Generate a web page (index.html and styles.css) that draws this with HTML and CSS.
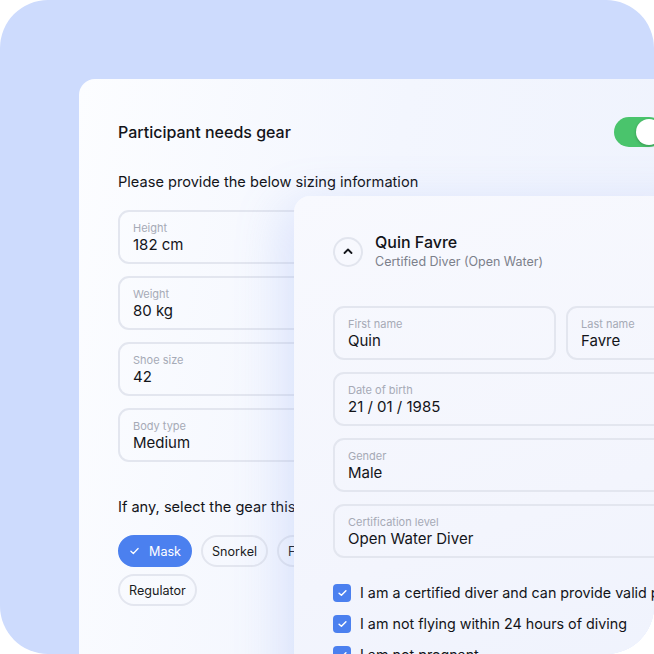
FILE: index.html
```html
<!DOCTYPE html>
<html lang="en">
<head>
<meta charset="utf-8">
<title>Participant gear</title>
<link rel="stylesheet" href="styles.css">
</head>
<body>
<div class="frame">
  <section class="card card-gear">
    <div class="gear-head">
      <h2 class="title">Participant needs gear</h2>
      <span class="toggle"><span class="knob"></span></span>
    </div>
    <p class="para">Please provide the below sizing information</p>
    <div class="fields">
      <div class="field"><span class="label">Height</span><span class="value">182 cm</span></div>
      <div class="field"><span class="label">Weight</span><span class="value">80 kg</span></div>
      <div class="field"><span class="label">Shoe size</span><span class="value">42</span></div>
      <div class="field"><span class="label">Body type</span><span class="value">Medium</span></div>
    </div>
    <p class="para para-gear">If any, select the gear this participant needs</p>
    <div class="chips">
      <span class="chip chip-on"><svg class="chip-check" viewBox="0 0 10 8" width="9" height="8"><path d="M1 4.2 L3.7 6.8 L9 1.2" fill="none" stroke="#fff" stroke-width="1.4" stroke-linecap="round" stroke-linejoin="round"/></svg>Mask</span>
      <span class="chip">Snorkel</span>
      <span class="chip">Fins</span>
      <span class="chip">Wetsuit</span>
      <span class="chip">Regulator</span>
    </div>
  </section>

  <section class="card card-person">
    <div class="person-head">
      <span class="collapse"><svg viewBox="0 0 10 6" width="10" height="6"><path d="M1.5 5 L5 1.5 L8.5 5" fill="none" stroke="#15171c" stroke-width="1.8" stroke-linecap="round" stroke-linejoin="round"/></svg></span>
      <div class="person-text">
        <h3 class="name">Quin Favre</h3>
        <p class="sub">Certified Diver (Open Water)</p>
      </div>
    </div>
    <div class="fields fields-person">
      <div class="row">
        <div class="field field-first"><span class="label">First name</span><span class="value">Quin</span></div>
        <div class="field field-last"><span class="label">Last name</span><span class="value">Favre</span></div>
      </div>
      <div class="field"><span class="label">Date of birth</span><span class="value">21 / 01 / 1985</span></div>
      <div class="field"><span class="label">Gender</span><span class="value">Male</span></div>
      <div class="field"><span class="label">Certification level</span><span class="value">Open Water Diver</span></div>
    </div>
    <ul class="checks">
      <li class="check"><span class="box"><svg viewBox="0 0 10 8" width="9" height="8"><path d="M1.2 4.2 L3.8 6.6 L8.8 1.4" fill="none" stroke="#fff" stroke-width="1.6" stroke-linecap="round" stroke-linejoin="round"/></svg></span>I am a certified diver and can provide valid proof</li>
      <li class="check"><span class="box"><svg viewBox="0 0 10 8" width="9" height="8"><path d="M1.2 4.2 L3.8 6.6 L8.8 1.4" fill="none" stroke="#fff" stroke-width="1.6" stroke-linecap="round" stroke-linejoin="round"/></svg></span>I am not flying within 24 hours of diving</li>
      <li class="check"><span class="box"><svg viewBox="0 0 10 8" width="9" height="8"><path d="M1.2 4.2 L3.8 6.6 L8.8 1.4" fill="none" stroke="#fff" stroke-width="1.6" stroke-linecap="round" stroke-linejoin="round"/></svg></span>I am not pregnant</li>
    </ul>
  </section>
</div>
</body>
</html>
```
FILE: styles.css
```css
* { box-sizing: border-box; }
html, body { margin: 0; padding: 0; background: #ffffff; }
body {
  font-family: Inter, "Noto Sans", "Liberation Sans", sans-serif;
  color: #131419;
  width: 654px;
  height: 654px;
  overflow: hidden;
}
.frame {
  position: relative;
  width: 654px;
  height: 654px;
  border-radius: 48px;
  overflow: hidden;
  background: #cddbfd;
  padding: 79px 0 0 79px;
}
.card {
  border-radius: 16px;
}
.card-gear {
  width: 624px;
  height: 640px;
  padding: 38px 39px 0 39px;
  background: linear-gradient(100deg, #fcfdff 0%, #f3f6fe 45%, #eef2fd 100%);
}
.gear-head {
  display: flex;
  align-items: center;
  justify-content: space-between;
  height: 30px;
}
.title {
  margin: 0;
  font-size: 16px;
  font-weight: 450;
  line-height: 20px;
}
.toggle {
  width: 50px;
  height: 30px;
  border-radius: 15px;
  background: #4ac46c;
  display: flex;
  align-items: center;
  padding-left: 22px;
}
.knob {
  width: 26px;
  height: 26px;
  border-radius: 50%;
  background: #ffffff;
  box-shadow: 0 1px 3px rgba(0,0,0,0.25);
}
.para {
  margin: 25px 0 18px;
  font-size: 14.6px;
  line-height: 20px;
  font-weight: 420;
}
.para-gear { margin: 35px 0 18px; }
.fields {
  display: flex;
  flex-direction: column;
  gap: 12px;
  width: 360px;
}
.field {
  display: flex;
  flex-direction: column;
  height: 54px;
  border: 2px solid #e3e6ef;
  border-radius: 11px;
  padding: 9px 13px 7px;
}
.label {
  font-size: 11px;
  line-height: 14px;
  color: #a6aab6;
}
.value {
  font-size: 15px;
  line-height: 20px;
  font-weight: 420;
  color: #131419;
}
.chips {
  display: flex;
  flex-wrap: wrap;
  column-gap: 9px;
  row-gap: 7px;
  width: 330px;
}
.chip {
  display: inline-flex;
  align-items: center;
  height: 32px;
  padding: 0 9px;
  border: 2px solid #e3e6ef;
  border-radius: 16px;
  font-size: 12.6px;
  font-weight: 420;
  color: #1a1c22;
}
.chip-on {
  background: #4b80ef;
  border-color: #4b80ef;
  color: #ffffff;
  padding-left: 10px;
  padding-right: 9px;
}
.chip-check { margin-right: 10px; }

.card-person {
  position: absolute;
  left: 294px;
  top: 196px;
  width: 420px;
  height: 520px;
  padding: 36px 39px 0 39px;
  background: linear-gradient(160deg, #f8f9fe 0%, #f3f5fd 60%, #eef2fd 100%);
  box-shadow: -10px 10px 50px rgba(120, 150, 240, 0.22);
}
.person-head {
  display: flex;
  align-items: center;
  gap: 12px;
}
.collapse {
  width: 30px;
  height: 30px;
  border-radius: 50%;
  border: 2px solid #e2e5ee;
  display: flex;
  align-items: center;
  justify-content: center;
  padding-bottom: 2px;
}
.person-text { display: flex; flex-direction: column; }
.name {
  margin: 0;
  font-size: 16px;
  line-height: 21px;
  font-weight: 450;
}
.sub {
  margin: 0;
  font-size: 12.5px;
  line-height: 18px;
  color: #7c808b;
}
.fields-person {
  margin-top: 35px;
  width: 400px;
  gap: 12px;
}
.row {
  display: flex;
  gap: 10px;
}
.field-first { width: 223px; flex: none; }
.field-last { flex: 1; }
.checks {
  list-style: none;
  margin: 25px 0 0;
  padding: 0;
  display: flex;
  flex-direction: column;
  gap: 11px;
}
.check {
  display: flex;
  align-items: center;
  gap: 9px;
  font-size: 14.3px;
  line-height: 20px;
  font-weight: 420;
  white-space: nowrap;
}
.box {
  width: 18px;
  height: 18px;
  border-radius: 4px;
  background: #4b80ef;
  display: flex;
  align-items: center;
  justify-content: center;
  flex: none;
}
```
